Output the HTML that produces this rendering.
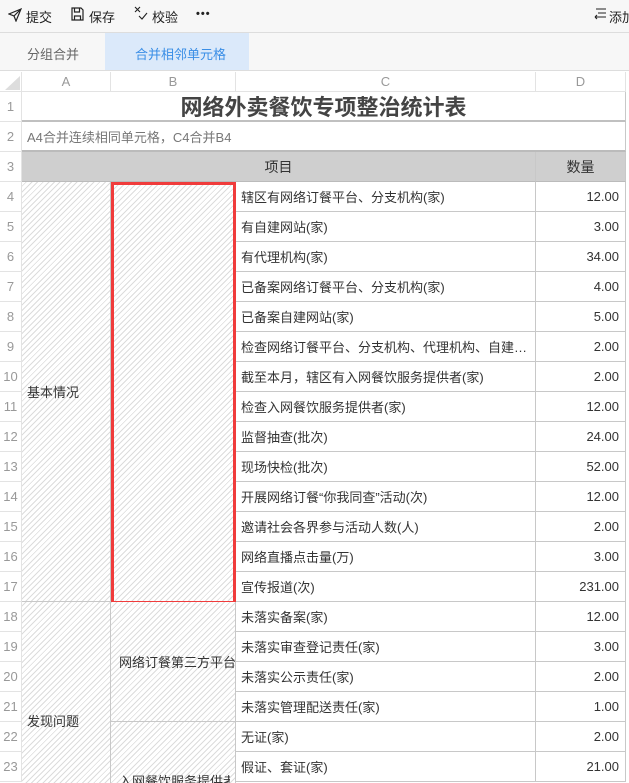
<!DOCTYPE html>
<html style="width:629px;height:783px;overflow:hidden"><head><meta charset="utf-8"><style>
*{margin:0;padding:0;box-sizing:border-box}
body{width:629px;height:783px;overflow:hidden;background:#fff;font-family:"Liberation Sans","Noto Sans CJK SC",sans-serif;font-size:13px;color:#333}
#w{position:absolute;left:0;top:0;width:629px;height:783px;overflow:hidden}
.a{position:absolute}
.tb{top:0;left:0;width:629px;height:33px;background:#f7f7f7;border-bottom:1px solid #ddd}
.tb span{position:absolute;top:7px;font-size:13px;color:#222;white-space:nowrap}
.tabs{top:33px;left:0;width:629px;height:38px;background:#f7f7f7;border-bottom:1px solid #ddd}
.c{position:absolute;border-right:1px solid #c8c8c8;border-bottom:1px solid #c8c8c8;display:flex;align-items:center;padding:0 5px;white-space:nowrap;overflow:hidden;background:#fff}
.c i{font-style:normal;overflow:hidden;text-overflow:ellipsis;white-space:nowrap;display:block;max-width:100%}
.h{background:repeating-linear-gradient(-45deg,#fff 0 3px,#dcdcdc 3px 4px)}
.n{justify-content:flex-end;padding-right:6px}
.hd{position:absolute;background:#fff;border-right:1px solid #e3e3e3;border-bottom:1px solid #e3e3e3;color:#999;font-size:13px;display:flex;align-items:center;justify-content:center}
</style></head><body><div id="w">
<div class="a tb">
<svg class="a" style="left:8px;top:8px" width="14" height="14" viewBox="0 0 14 14"><path d="M13 1L1 6l5 2 2 5zM6 8l7-7" fill="none" stroke="#222" stroke-width="1.2"/></svg>
<span style="left:26px">提交</span>
<svg class="a" style="left:71px;top:7px" width="13" height="14" viewBox="0 0 13 14"><path d="M1 1h9l2 2v10H1zM3.5 1v4h5V1M3.5 13V9h6v4" fill="none" stroke="#222" stroke-width="1.2"/></svg>
<span style="left:89px">保存</span>
<svg class="a" style="left:134px;top:6px" width="14" height="14" viewBox="0 0 14 14"><path d="M1 1l5 5M6 1L1 6M5 10l3 3 5-6" fill="none" stroke="#222" stroke-width="1.1"/></svg>
<span style="left:152px">校验</span>
<span style="left:196px;top:8px;font-weight:bold;letter-spacing:1px;font-size:11px">•••</span>
<svg class="a" style="left:593px;top:7px" width="13" height="13" viewBox="0 0 13 13"><path d="M3 2h10M5 6h8M2 10h11M2 10l2-2M2 10l2 2" fill="none" stroke="#222" stroke-width="1.1"/></svg>
<span style="left:609px">添加</span>
</div>
<div class="a tabs">
<span class="a" style="left:27px;top:11px;color:#666">分组合并</span>
<div class="a" style="left:105px;top:0;width:144px;height:37px;background:#dbe9fa"></div>
<span class="a" style="left:135px;top:11px;color:#3a8ee6">合并相邻单元格</span>
</div>
<div class="hd" style="left:0;top:72px;width:22px;height:20px"><svg width="22" height="20"><path d="M20 4v14H5z" fill="#ddd"/></svg></div>
<div class="hd" style="left:22px;top:72px;width:89px;height:20px">A</div>
<div class="hd" style="left:111px;top:72px;width:125px;height:20px">B</div>
<div class="hd" style="left:236px;top:72px;width:300px;height:20px">C</div>
<div class="hd" style="left:536px;top:72px;width:90px;height:20px">D</div>
<div id="rh"></div>
<div class="c" style="left:22px;top:92px;width:604px;height:30px;justify-content:center;font-size:22px;font-weight:bold;color:#444;border-bottom:2px solid #c0c0c0">网络外卖餐饮专项整治统计表</div>
<div class="c" style="left:22px;top:122px;width:604px;height:30px;color:#777;border-bottom:2px solid #bbb">A4合并连续相同单元格，C4合并B4</div>
<div class="c" style="left:22px;top:152px;width:514px;height:30px;justify-content:center;background:#cfcfcf;font-size:14px;border-bottom:1px solid #bbb">项目</div>
<div class="c" style="left:536px;top:152px;width:90px;height:30px;justify-content:center;background:#cfcfcf;font-size:14px;border-bottom:1px solid #bbb">数量</div>
<div class="c h" style="left:22px;top:182px;width:89px;height:420px">基本情况</div>
<div class="c h" style="left:111px;top:182px;width:125px;border:3px solid #f03c3c;height:422px"></div>
<div class="c h" style="left:22px;top:602px;width:89px;height:181px;border-bottom:none;align-items:flex-start;padding-top:111px;line-height:18px">发现问题</div>
<div class="c h" style="left:111px;top:602px;width:125px;height:120px;padding-left:8px">网络订餐第三方平台</div>
<div class="c h" style="left:111px;top:722px;width:125px;height:61px;border-bottom:none;padding-left:8px;align-items:flex-start;padding-top:52px"><span style="display:block;height:9px;overflow:hidden;line-height:16px">入网餐饮服务提供者</span></div>
<div id="rows"></div>
</div>
<script>
var d=[["辖区有网络订餐平台、分支机构(家)","12.00"],["有自建网站(家)","3.00"],["有代理机构(家)","34.00"],["已备案网络订餐平台、分支机构(家)","4.00"],["已备案自建网站(家)","5.00"],["检查网络订餐平台、分支机构、代理机构、自建网站(家)","2.00"],["截至本月，辖区有入网餐饮服务提供者(家)","2.00"],["检查入网餐饮服务提供者(家)","12.00"],["监督抽查(批次)","24.00"],["现场快检(批次)","52.00"],["开展网络订餐“你我同查”活动(次)","12.00"],["邀请社会各界参与活动人数(人)","2.00"],["网络直播点击量(万)","3.00"],["宣传报道(次)","231.00"],["未落实备案(家)","12.00"],["未落实审查登记责任(家)","3.00"],["未落实公示责任(家)","2.00"],["未落实管理配送责任(家)","1.00"],["无证(家)","2.00"],["假证、套证(家)","21.00"]];
var h="";
for(var i=0;i<d.length;i++){var t=182+i*30;
h+='<div class="c" style="left:236px;top:'+t+'px;width:300px;height:30px"><i>'+d[i][0]+'</i></div><div class="c n" style="left:536px;top:'+t+'px;width:90px;height:30px">'+d[i][1]+'</div>';}
document.getElementById("rows").innerHTML=h;
var r="";for(var k=1;k<=23;k++){r+='<div class="hd" style="left:0;top:'+(92+(k-1)*30)+'px;width:22px;height:30px">'+k+'</div>';}
document.getElementById("rh").innerHTML=r;
</script>
</body></html>
